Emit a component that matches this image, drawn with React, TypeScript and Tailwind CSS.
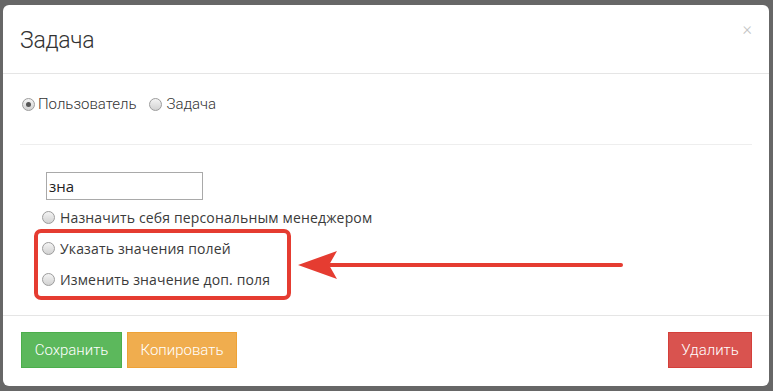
import React from "react";

const Radio = ({ checked = false }: { checked?: boolean }) => (
  <span className="inline-flex h-[13px] w-[13px] shrink-0 items-center justify-center rounded-full border border-[#9c9c9c] bg-gradient-to-b from-[#f4f4f4] to-[#d2d2d2]">
    {checked && <span className="h-[5px] w-[5px] rounded-full bg-[#555]" />}
  </span>
);

const options = [
  "Назначить себя персональным менеджером",
  "Указать значения полей",
  "Изменить значение доп. поля",
];

export default function App() {
  return (
    <div className="h-[391px] w-[773px] overflow-hidden bg-[#676767] pl-[3px] pt-[5px]">
      <div className="relative flex h-[381px] w-[766px] flex-col rounded-[6px] bg-white font-['Roboto',sans-serif] text-[#333]">
        {/* шапка */}
        <div className="relative flex h-[69px] items-center border-b border-[#e5e5e5] pl-[17px]">
          <h4 className="mt-[4px] text-[23px] font-light tracking-[-0.3px] text-[#333]">Задача</h4>
          <span className="absolute right-[17px] top-[15px] text-[18px] font-light leading-none text-[#c4c4c4]">×</span>
        </div>

        {/* тело */}
        <div className="flex-1 px-[17px]">
          <div className="flex h-[70px] items-center pb-[10px] text-[15px] font-light">
            <label className="ml-[2px] flex items-center gap-[3px]">
              <Radio checked />
              <span>Пользователь</span>
            </label>
            <label className="ml-[12px] flex items-center gap-[5px]">
              <Radio />
              <span>Задача</span>
            </label>
          </div>
          <div className="border-t border-[#eee]" />
          <div className="pl-[22px] pt-[27px] font-['Open_Sans',sans-serif] text-[14px] text-[#3a3a3a]">
            <input
              readOnly
              value="зна"
              className="ml-[4px] h-[28px] w-[157px] border border-[#a9a9a9] px-[2px] text-[15px] text-[#222] outline-none"
            />
            <div className="mt-[2px] flex flex-col">
              {options.map((o) => (
                <label key={o} className="flex h-[31px] items-center gap-[5px]">
                  <Radio />
                  <span className="tracking-[0.15px]">{o}</span>
                </label>
              ))}
            </div>
          </div>
        </div>

        {/* подвал */}
        <div className="flex h-[71px] items-start justify-between border-t border-[#e5e5e5] px-[18px] pt-[16px] text-[15px] font-light text-white">
          <div className="flex gap-[5px]">
            <button className="h-[36px] w-[101px] border border-[#4cae4c] bg-[#5cb85c]">Сохранить</button>
            <button className="h-[36px] w-[110px] border border-[#eea236] bg-[#f0ad4e]">Копировать</button>
          </div>
          <button className="mr-[-1px] h-[36px] w-[84px] border border-[#d43f3a] bg-[#d9534f]">Удалить</button>
        </div>

        {/* аннотация */}
        <div className="pointer-events-none absolute left-[31px] top-[224px] h-[71px] w-[257px] rounded-[7px] border-[4px] border-[#e53c31]" />
        <svg className="pointer-events-none absolute left-[290px] top-[240px]" width="340" height="40" viewBox="0 0 340 40">
          <line x1="37" y1="20" x2="328" y2="20" stroke="#e53c31" strokeWidth="4" strokeLinecap="round" />
          <path d="M5 20 L44 6 L36 20 L44 34 Z" fill="#e53c31" />
        </svg>
      </div>
    </div>
  );
}
